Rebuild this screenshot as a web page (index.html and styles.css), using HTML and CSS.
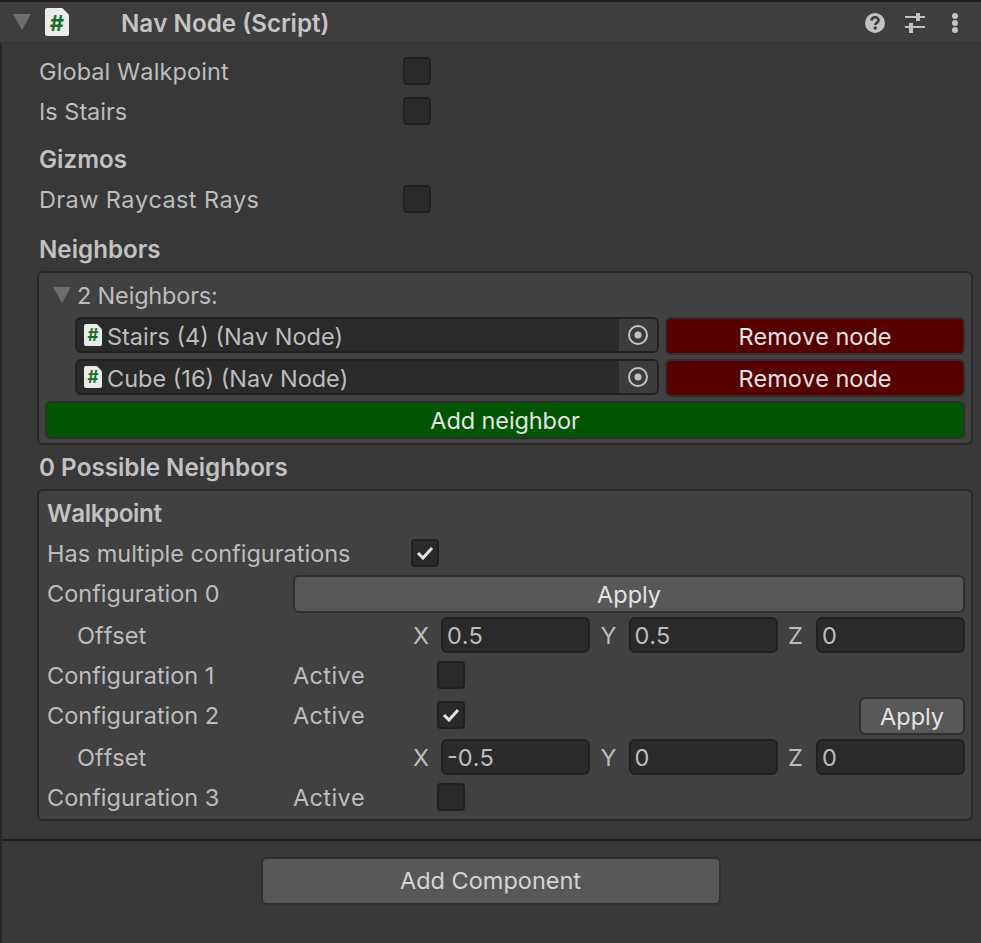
FILE: index.html
```html
<!DOCTYPE html>
<html lang="en">
<head>
<meta charset="utf-8">
<title>Nav Node (Script)</title>
<link rel="stylesheet" href="styles.css">
</head>
<body>
<main class="inspector">
  <header class="header">
    <svg class="fold fold-main" viewBox="0 0 18 16"><path d="M0 0H18L9 16Z"/></svg>
    <span class="script-icon script-icon-lg"><span>#</span></span>
    <h1 class="title">Nav Node (Script)</h1>
    <div class="tools">
      <svg class="tool" width="22" height="22" viewBox="0 0 22 22"><circle cx="11" cy="11" r="10" fill="#c2c2c2"/><path d="M7.5 8.6C7.6 6.500 9.100 5.300 11.100 5.300C13.100 5.300 14.600 6.500 14.600 8.300C14.600 10.600 11.300 10.700 11.300 13" fill="none" stroke="#3e3e3e" stroke-width="2.600"/><circle cx="11.200" cy="16" r="1.700" fill="#3e3e3e"/></svg>
      <svg class="tool" width="22" height="22" viewBox="0 0 22 22" fill="#c2c2c2"><path d="M1 4H12V1H16V4H21V6H16V9H12V6H1ZM1 14H5V11H9V14H21V16H9V21H5V16H1Z"/></svg>
      <svg class="tool tool-dots" width="8" height="22" viewBox="0 0 8 22" fill="#c2c2c2"><circle cx="4" cy="4" r="3"/><circle cx="4" cy="11" r="3"/><circle cx="4" cy="18" r="3"/></svg>
    </div>
  </header>

  <section class="body">
    <div class="row row-top"><span class="label label-main label-global">Global Walkpoint</span><span class="check"></span></div>
    <div class="row"><span class="label label-main">Is Stairs</span><span class="check"></span></div>
    <div class="row row-head gizmos"><strong>Gizmos</strong></div>
    <div class="row"><span class="label label-main label-draw">Draw Raycast Rays</span><span class="check"></span></div>
    <div class="row row-head neighbors-head"><strong>Neighbors</strong></div>

    <div class="box box-neighbors">
      <div class="foldout">
        <svg class="fold" viewBox="0 0 18 16"><path d="M0 0H18L9 16Z"/></svg>
        <span class="label label-fold">2 Neighbors:</span>
      </div>
      <div class="node-row">
        <div class="object-field">
          <span class="script-icon"><span>#</span></span>
          <span class="label object-name">Stairs (4) (Nav Node)</span>
          <span class="picker"><svg width="22" height="22" viewBox="0 0 22 22"><circle cx="11" cy="11" r="9" fill="none" stroke="#c2c2c2" stroke-width="2"/><circle cx="11" cy="11" r="3.500" fill="#c2c2c2"/></svg></span>
        </div>
        <button class="btn btn-red">Remove node</button>
      </div>
      <div class="node-row">
        <div class="object-field">
          <span class="script-icon"><span>#</span></span>
          <span class="label object-name">Cube (16) (Nav Node)</span>
          <span class="picker"><svg width="22" height="22" viewBox="0 0 22 22"><circle cx="11" cy="11" r="9" fill="none" stroke="#c2c2c2" stroke-width="2"/><circle cx="11" cy="11" r="3.500" fill="#c2c2c2"/></svg></span>
        </div>
        <button class="btn btn-red">Remove node</button>
      </div>
      <button class="btn btn-green">Add neighbor</button>
    </div>

    <div class="row row-head possible"><strong>0 Possible Neighbors</strong></div>

    <div class="box box-walk">
      <div class="wrow walk-title"><strong>Walkpoint</strong></div>
      <div class="wrow"><span class="label label-multi">Has multiple configurations</span>
        <span class="check checked"><svg width="18" height="14" viewBox="0 0 18 14"><path d="M2 7L7 12L16 2" fill="none" stroke="#e4e4e4" stroke-width="3"/></svg></span></div>
      <div class="wrow"><span class="label label-config">Configuration 0</span><button class="btn btn-grey btn-wide">Apply</button></div>
      <div class="wrow wrow-offset"><span class="label label-offset">Offset</span>
        <div class="vector">
          <span class="label axis">X</span><span class="label num">0.5</span>
          <span class="label axis">Y</span><span class="label num">0.5</span>
          <span class="label axis">Z</span><span class="label num">0</span>
        </div>
      </div>
      <div class="wrow wrow-after"><span class="label label-config">Configuration 1</span><span class="label label-active">Active</span><span class="check"></span></div>
      <div class="wrow"><span class="label label-config">Configuration 2</span><span class="label label-active">Active</span>
        <span class="check checked"><svg width="18" height="14" viewBox="0 0 18 14"><path d="M2 7L7 12L16 2" fill="none" stroke="#e4e4e4" stroke-width="3"/></svg></span>
        <button class="btn btn-grey btn-small">Apply</button></div>
      <div class="wrow wrow-offset"><span class="label label-offset">Offset</span>
        <div class="vector">
          <span class="label axis">X</span><span class="label num">-0.5</span>
          <span class="label axis">Y</span><span class="label num">0</span>
          <span class="label axis">Z</span><span class="label num">0</span>
        </div>
      </div>
      <div class="wrow wrow-after"><span class="label label-config">Configuration 3</span><span class="label label-active">Active</span><span class="check"></span></div>
    </div>
  </section>

  <footer class="footer"><button class="btn btn-grey btn-add">Add Component</button></footer>
</main>
</body>
</html>
```
FILE: styles.css
```css
* { box-sizing: border-box; }
html, body { margin: 0; height: 100%; overflow: hidden; }
body { background: #383838; color: #bdbdbd; font: 400 23.5px/1 Inter, "Liberation Sans", sans-serif; font-kerning: none; }
.inspector { width: 981px; height: 943px; border-left: 2px solid #232323; display: flex; flex-direction: column; }
strong { font-size: 24.2px; font-weight: 600; color: #c2c2c2; padding-top: 2px; }
.label { padding-top: 2px; }

.header { height: 44px; background: #3e3e3e; border-top: 2px solid #1f1f1f; border-bottom: 2px solid #323232; display: flex; align-items: center; position: relative; margin-left: -2px; }
.fold { width: 18px; height: 16px; fill: #6e6e6e; display: block; flex: none; }
.fold-main { margin-left: 13px; }
.title { margin: 0 0 0 52px; padding-top: 4px; font-size: 24.2px; font-weight: 600; color: #c4c4c4; }
.tools { margin-left: auto; margin-right: 22px; display: flex; align-items: center; gap: 18px; padding-top: 2px; }
.tool-dots { margin-left: 7px; }

.script-icon { background: #e9ece8; color: #1f6d2a; display: flex; align-items: center; justify-content: center; flex: none; width: 18px; height: 22px; font-size: 17px; font-weight: 700; padding-top: 1px; clip-path: polygon(0 0, 72% 0, 100% 24%, 100% 100%, 0 100%); border-radius: 2px; }
.script-icon-lg { width: 24px; height: 28px; font-size: 22px; padding-top: 2px; margin-left: 14px; }

.body { padding: 0 7px 0 35px; flex: none; height: 797px; border-bottom: 2px solid #1f1f1f; }
.row { height: 40px; display: flex; align-items: center; }
.row-top { margin-top: 7px; }
.gizmos { margin-top: 8px; }
.neighbors-head { margin-top: 10px; height: 40px; }
.possible { margin-top: 2px; }
.row-head strong { margin-left: 2px; }
.label-main { width: 364px; margin-left: 2px; flex: none; }
.label-global { letter-spacing: .12px; }
.label-draw { letter-spacing: .4px; }
.label-fold { letter-spacing: -.18px; }
.walk-title strong { letter-spacing: -.4px; }

.check { width: 28px; height: 28px; background: #2a2a2a; border: 2px solid #212121; border-radius: 4px; display: flex; align-items: center; justify-content: center; flex: none; }

.box { background: #414141; border: 2px solid #282828; border-radius: 6px; width: 936px; }
.box-neighbors { height: 174px; margin-top: 2px; padding: 0 6px; }
.foldout { height: 44px; display: flex; align-items: center; padding-left: 8px; gap: 6px; }
.node-row { height: 36px; display: flex; margin-left: 30px; margin-bottom: 6px; gap: 6px; }
.object-field { width: 584px; height: 36px; background: #2a2a2a; border: 2px solid #212121; border-radius: 6px; display: flex; align-items: center; padding-left: 7px; overflow: hidden; }
.object-name { margin-left: 5px; flex: 1; padding-top: 4px; }
.picker { width: 38px; height: 100%; background: #3c3c3c; display: flex; align-items: center; justify-content: center; }

.btn { font: inherit; border: 2px solid #2f2f2f; border-radius: 6px; color: #e4e4e4; display: block; padding: 1px 0 0; font-kerning: none; }
.btn-red { width: 300px; height: 38px; background: #570000; }
.btn-green { width: 920px; height: 38px; background: #005500; letter-spacing: -.1px; }
.btn-grey { background: #585858; }
.btn-wide { width: 675px; height: 38px; margin: 2px 0 0 auto; }
.btn-small { width: 106px; height: 38px; margin: 2px 0 0 auto; }
.btn-add { width: 460px; height: 48px; color: #d4d4d4; padding: 0; }

.box-walk { height: 332px; margin-top: 2px; padding: 2px 6px 0 8px; }
.wrow { height: 40px; display: flex; align-items: center; }
.wrow-offset { height: 42px; margin-top: 1px; }
.wrow-after { margin-top: -1px; }
.label-multi { width: 364px; flex: none; }
.label-config { width: 246px; flex: none; }
.label-offset { width: 336px; margin-left: 30px; flex: none; }
.label-active { width: 144px; flex: none; letter-spacing: .35px; }
.vector { display: flex; align-items: center; }
.axis { width: 28px; flex: none; text-align: left; }
.num { width: 149px; height: 36px; margin-right: 10.500px; background: #2a2a2a; border: 2px solid #212121; border-radius: 6px; display: flex; align-items: center; padding: 2px 0 0 4px; flex: none; }
.num:last-child { margin-right: 0; }

.footer { flex: 1; display: flex; justify-content: center; padding-top: 16px; align-items: flex-start; margin-left: -2px; }
```
